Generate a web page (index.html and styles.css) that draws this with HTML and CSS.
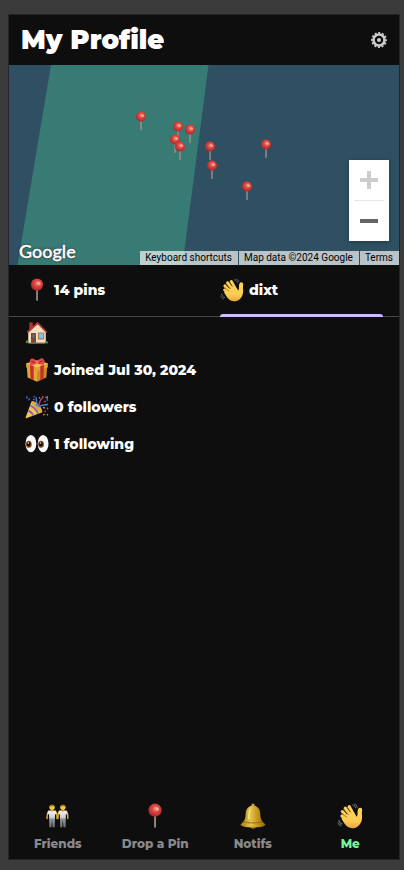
FILE: index.html
```
<!DOCTYPE html>
<html lang="en">
<head>
<meta charset="utf-8">
<meta name="viewport" content="width=device-width, initial-scale=1">
<title>My Profile</title>
<link rel="stylesheet" href="styles.css">
</head>
<body>
<svg class="defs" aria-hidden="true">
  <defs>
    <radialGradient id="red" cx=".55" cy=".4" r=".6">
      <stop offset="0" stop-color="#f7988a"/><stop offset=".4" stop-color="#df4a43"/><stop offset="1" stop-color="#a92428"/>
    </radialGradient>
    <linearGradient id="skin" gradientUnits="userSpaceOnUse" x1="0" y1="2" x2="0" y2="23">
      <stop offset="0" stop-color="#ffd75a"/><stop offset=".7" stop-color="#fccb55"/><stop offset="1" stop-color="#eba83a"/>
    </linearGradient>
    <linearGradient id="gold" x1="0" y1="0" x2="1" y2="0">
      <stop offset="0" stop-color="#a8760d"/><stop offset=".4" stop-color="#e6c44c"/><stop offset=".65" stop-color="#c99a22"/><stop offset="1" stop-color="#8e620f"/>
    </linearGradient>
    <linearGradient id="cloth" x1="0" y1="0" x2="0" y2="1">
      <stop offset="0" stop-color="#f4f4f4"/><stop offset=".45" stop-color="#c9cdd0"/><stop offset=".5" stop-color="#8e9397"/><stop offset="1" stop-color="#70757a"/>
    </linearGradient>
    <symbol id="pin" viewBox="0 0 24 24">
      <path d="M11.2 10h1.700v12.200l-.9.8-.8-.8z" fill="#a08f88"/>
      <circle cx="12" cy="6.600" r="6.100" fill="url(#red)"/>
      <path d="M12.500 3.800l3 .6.3 2.300-2.600.4z" fill="#ffc2b5" opacity=".65"/>
    </symbol>
    <symbol id="wave" viewBox="0 0 24 24">
      <g fill="none" stroke="url(#skin)" stroke-linecap="round" stroke-width="2.900">
        <path d="M13 12.500L7.600 4.800"/><path d="M16 12L11.300 3.400"/><path d="M11 14.500L4.900 7.900"/><path d="M10 16.500L4.600 12"/>
      </g>
      <path d="M7 13l6.500-6.500 4.700 6.100c.9-1.200.7-2.800.8-4.600.1-2.600 1.200-4 2.800-3.600 1.500.4 1.600 1.500 1.300 3.300-.4 2.300.3 4.300-.1 7.200-.6 4.800-4.700 8.600-9 8.400-3-.1-5-1.700-6.800-3.900L4 14.200z" fill="url(#skin)"/>
      <path d="M12.800 8.600L9.500 3.800M10.800 10.700L6 5.600M9 13L4.600 9.400" fill="none" stroke="#a0681d" stroke-width=".7" stroke-linecap="round"/>
      <path d="M14 1.600c1.800.3 2.900 1.500 3.500 3.200M15.900.7c1.600.7 2.500 1.800 3 3.500M1.600 15.600c.3 2 1.500 3.300 3.400 3.900M.7 17.600c.5 1.800 1.700 3 3.400 3.500" fill="none" stroke="#626466" stroke-width="1"/>
    </symbol>
    <symbol id="house" viewBox="0 0 24 24">
      <path d="M4.300 1.500h3.500v7H4.300z" fill="#a83a30"/>
      <path d="M3.200 11L12.700 3l8.100 8v11.300H3.200z" fill="#f1dfbd"/>
      <path d="M2.300 11.500L12.700 2l9.100 9.500" fill="none" stroke="#b83a33" stroke-width="1.700" stroke-linejoin="round"/>
      <path d="M6 12h5v10.300H6z" fill="#7c4932"/><path d="M7.200 13.300h2.500v3H7.200z" fill="#50748a"/>
      <path d="M13 11.500h6.200v7H13z" fill="#a77548"/><path d="M13.900 12.400h4.400v4.900h-4.400z" fill="#78c4ee"/>
      <path d="M1 22c-.7-2.300 1-3.800 2.500-2l.8 2.300zM19.500 22.300c.2-2.600 2.600-3.600 3.800-.5l-.4.7z" fill="#568b3d"/>
      <path d="M5 22h14.500" stroke="#8b7866"/>
    </symbol>
    <symbol id="gift" viewBox="0 0 24 24">
      <path d="M1.800 8L12 12v11.700L2.600 19.500z" fill="#e2a834"/><path d="M12 12l10.200-4-.8 11.500-9.400 4.200z" fill="#cb8b25"/>
      <path d="M1 5.600L12 2.600l11 3-.3 3.800L12 13.200 1.300 9.400z" fill="#e0a237"/><path d="M1 5.600l11-3 11 3-11 3.600z" fill="#f4c54f"/>
      <path d="M5 6.900l3.700 1.200v14.100l-3.200-1.500zM15.300 8.100L19 6.900l-.5 13.800-3.200 1.500z" fill="#c62e30"/>
      <path d="M12 5.600C8 7.200 5 7.900 4.700 6.100S4.800.8 6.800.5C9 .3 10.500 2 12 3.200 13.700 1.600 16-.4 17.800.5c1.600.9 2.600 4.600 1.300 5.800-1.200 1-4.800.1-7.100-.7z" fill="#e34a47"/>
      <path d="M6.200 3.200l4.300 1.600M17.800 2.700l-4.200 2" stroke="#951f28"/><circle cx="12" cy="4.400" r="1.800" fill="#f16963"/>
    </symbol>
    <symbol id="party" viewBox="0 0 24 24">
      <path d="M6.600 6.300C11.500 7 16.500 12 17.300 17.300L1.300 23.300c-.6.100-.9-.2-.7-.8z" fill="#f0c552"/>
      <ellipse cx="12" cy="11.600" rx="2.400" ry="7.300" transform="rotate(-43 12 11.600)" fill="#dba944"/>
      <path d="M5.300 10.500c3.500 1.700 6.400 4.600 7.800 8.300M3.300 15.600c2.400 1 4.200 2.900 5 4.900" fill="none" stroke="#8d55c4" stroke-width="1.700"/>
      <path d="M12 11.500C12.800 7.700 10.400 6 11.300 2.400M13.500 12c2.800-2.700 5.800-1.400 9.500-2.700" fill="none" stroke="#3d83df" stroke-width="1.500"/>
      <path d="M12.900 10.600c3.200-2.100.7-4.600 3.400-6.400 1.500-1 1.800-2 1.400-3.200" fill="none" stroke="#c54267" stroke-width="1.400"/>
      <path d="M1.500 1.300l.8 2.500M5 3.300L3.400 5.300M20 2.200c2.400 0 2.800 1.400 2.200 3.600M8.700 1l1 1.300" fill="none" stroke="#3f68d5" stroke-width="1.300"/>
      <path d="M8 4l1.600 1M19 7l1.700-1M22 12.600l1 1.700M19.500 16.700l1.500-1" stroke="#d24465" stroke-width="1.300"/>
      <path d="M14 2.400l1 1M18 12.400l2 .8M18.500 20.300l1-1.400M22 19l.8 1.300M22.800 1.300l-1 1.300" stroke="#cf9430" stroke-width="1.300"/>
    </symbol>
    <symbol id="eyes" viewBox="0 0 24 24">
      <ellipse cx="5.900" cy="11.700" rx="5.400" ry="8.600" fill="#fafafa"/><ellipse cx="18.100" cy="11.700" rx="5.400" ry="8.600" fill="#fafafa"/>
      <ellipse cx="3.800" cy="12.200" rx="2.900" ry="3.500" fill="#7d4a20"/><ellipse cx="16" cy="12.200" rx="2.900" ry="3.500" fill="#7d4a20"/>
      <ellipse cx="3.700" cy="12.200" rx="1.700" ry="2.200" fill="#130e0b"/><ellipse cx="15.900" cy="12.200" rx="1.700" ry="2.200" fill="#130e0b"/>
      <circle cx="3.300" cy="11" r=".7" fill="#fff"/><circle cx="15.500" cy="11" r=".7" fill="#fff"/>
    </symbol>
    <symbol id="person" viewBox="0 0 12 24">
      <path d="M2.700 7C1 9 .8 11.600 1 14.500M9.300 7c1.700 2 1.900 4.600 1.700 7.500" fill="none" stroke="#edb932" stroke-width="1.400" stroke-linecap="round"/>
      <path d="M4 6.500h4c1.600 0 2.300 1.400 2.400 3.500L9 10.600l-.3 12.700H6.600L6 15.500l-.6 7.800H3.300L3 10.600l-1.400-.6C1.700 7.900 2.400 6.500 4 6.500z" fill="url(#cloth)"/>
      <path d="M5 5h2v2L6 8 5 7z" fill="#d79c20"/><circle cx="6" cy="3.300" r="2.700" fill="#f5c940"/>
      <path d="M3.200 3.500C2.700-.1 9.300-.1 8.800 3.500 8 1.700 5 1.500 3.200 3.500z" fill="#987015"/>
    </symbol>
    <symbol id="friends" viewBox="0 0 24 24">
      <use href="#person" x="1" y="0" width="11" height="24"/><use href="#person" x="11" y="0" width="11" height="24"/>
    </symbol>
    <symbol id="bell" viewBox="0 0 24 24">
      <circle cx="12" cy="1.900" r="1.500" fill="#cfa02a"/><ellipse cx="12" cy="21.700" rx="2.800" ry="2" fill="#9c6c18"/>
      <path d="M10.200 2.500h3.600c3.800 1.400 4.800 4.300 5 8.200.2 4.300 1.200 6.600 4.700 8.800-.2 2.300-5 2.900-11.500 2.900S.7 21.800.5 19.500c3.500-2.200 4.500-4.500 4.700-8.800.2-3.900 1.200-6.800 5-8.200z" fill="url(#gold)"/>
      <path d="M3.500 17.200c4 1.700 13 1.700 17 0" fill="none" stroke="#8d6310" stroke-width=".8"/>
      <path d="M9.300 6c-1 2-1 5.500-1.300 9" fill="none" stroke="#fff1a0" stroke-width="1.300" opacity=".8"/>
    </symbol>
  </defs>
</svg>

<main class="app">
  <header class="header">
    <h1 class="title">My Profile</h1>
    <button class="settings" type="button" aria-label="Settings">
      <svg class="gear" viewBox="0 0 16 16" aria-hidden="true">
        <circle cx="8" cy="8" r="7.100" fill="none" stroke="#ccc" stroke-width="1.700" stroke-dasharray="2.100 1.617" stroke-dashoffset="1.050"/>
        <circle cx="8" cy="8" r="5.500" fill="none" stroke="#ccc" stroke-width="2.600"/>
        <circle cx="8" cy="8" r="2" fill="#ccc"/>
      </svg>
    </button>
  </header>

  <section class="map" aria-label="Map of pins">
    <svg class="map-canvas" viewBox="0 0 390 200" preserveAspectRatio="xMidYMid slice" aria-hidden="true">
      <path fill="#2e5062" d="M0 0h390v200H0z"/>
      <path fill="#387b75" d="M42 0h157.500l-26 200H8.500z"/>
      <use href="#pin" x="122" y="46" width="20" height="20"/>
      <use href="#pin" x="159" y="56" width="20" height="20"/>
      <use href="#pin" x="171" y="59" width="20" height="20"/>
      <use href="#pin" x="156" y="69" width="20" height="20"/>
      <use href="#pin" x="161" y="76" width="20" height="20"/>
      <use href="#pin" x="247" y="74" width="20" height="20"/>
      <use href="#pin" x="191" y="76" width="20" height="20"/>
      <use href="#pin" x="193" y="95" width="20" height="20"/>
      <use href="#pin" x="228" y="116" width="20" height="20"/>
    </svg>
    <span class="brand">Google</span>
    <div class="zoom">
      <button class="zoom-button" type="button" aria-label="Zoom in" disabled>
        <svg class="zoom-icon" viewBox="0 0 18 18"><path fill="#ccc" d="M7 0h4v7h7v4h-7v7H7v-7H0V7h7z"/></svg>
      </button>
      <button class="zoom-button" type="button" aria-label="Zoom out">
        <svg class="zoom-icon" viewBox="0 0 18 18"><path fill="#666" d="M0 7h18v4H0z"/></svg>
      </button>
    </div>
    <div class="credits">
      <button class="credit" type="button">Keyboard shortcuts</button>
      <span class="credit">Map data ©2024 Google</span>
      <a class="credit" href="#terms">Terms</a>
    </div>
  </section>

  <div class="tabs" role="tablist">
    <button class="tab" type="button" role="tab" aria-selected="false"><svg class="icon"><use href="#pin"/></svg>14 pins</button>
    <button class="tab tab-active" type="button" role="tab" aria-selected="true"><svg class="icon"><use href="#wave"/></svg>dixt</button>
  </div>

  <ul class="facts">
    <li class="fact"><svg class="icon"><use href="#house"/></svg></li>
    <li class="fact"><svg class="icon"><use href="#gift"/></svg>Joined Jul 30, 2024</li>
    <li class="fact"><svg class="icon"><use href="#party"/></svg>0 followers</li>
    <li class="fact"><svg class="icon"><use href="#eyes"/></svg>1 following</li>
  </ul>

  <nav class="nav">
    <a class="nav-link" href="#friends-page"><svg class="nav-icon"><use href="#friends"/></svg>Friends</a>
    <a class="nav-link" href="#drop"><svg class="nav-icon"><use href="#pin"/></svg>Drop a Pin</a>
    <a class="nav-link" href="#notifs"><svg class="nav-icon"><use href="#bell"/></svg>Notifs</a>
    <a class="nav-link nav-current" href="#me" aria-current="page"><svg class="nav-icon"><use href="#wave"/></svg>Me</a>
  </nav>
</main>
</body>
</html>
```
FILE: styles.css
```
* { box-sizing: border-box; }

body {
  display: flex;
  min-height: 100vh;
  margin: 0;
  padding: 14px 4px 10px 8px;
  background: #3b3b3b;
  color: #fff;
  font-family: Montserrat, Inter, sans-serif;
}

button { padding: 0; border: 0; background: none; color: inherit; font: inherit; }
a { color: inherit; text-decoration: none; }
.defs { position: absolute; width: 0; height: 0; }

.app {
  display: flex;
  flex: 1;
  flex-direction: column;
  border: 1px solid #262626;
  background: #0e0e0e;
}

.header {
  display: flex;
  align-items: center;
  justify-content: space-between;
  height: 50px;
  padding: 0 12px;
}
.title { margin: 0; font-size: 26px; font-weight: 900; line-height: 32px; }
.settings { display: flex; }
.gear { width: 16px; height: 16px; }

.map { position: relative; height: 200px; overflow: hidden; }
.map-canvas { display: block; width: 100%; height: 100%; }
.brand {
  position: absolute;
  left: 10px;
  bottom: 2px;
  font-family: Lato, sans-serif;
  font-size: 18px;
  font-weight: 500;
  line-height: 24px;
  text-shadow: 0 0 2px #333, 0 0 2px #333, 0 0 1px #333;
  -webkit-text-stroke: 0.4px #fff;
}
.zoom {
  position: absolute;
  right: 10px;
  bottom: 24px;
  width: 40px;
  padding: 0 5px;
  background: #fff;
  box-shadow: 0 1px 4px rgba(0, 0, 0, .3);
}
.zoom-button { display: grid; place-items: center; width: 100%; height: 40px; }
.zoom-button + .zoom-button { height: 41px; border-top: 1px solid #e6e6e6; }
.zoom-icon { width: 18px; height: 18px; }
.credits {
  position: absolute;
  right: 0;
  bottom: 0;
  display: flex;
  gap: 1px;
  color: #000;
  font-family: Roboto, sans-serif;
  font-size: 10px;
  line-height: 14px;
}
.credit { padding: 0 6px 0 5px; background: rgba(245, 245, 245, .7); }

.tabs {
  display: grid;
  grid-template-columns: 1fr 1fr;
  gap: 32px;
  height: 52px;
  padding: 0 16px;
  border-bottom: 1px solid #49454f;
}
.tab {
  position: relative;
  display: flex;
  align-items: center;
  gap: 5px;
  height: 50px;
  font-size: 14px;
  font-weight: 800;
}
.tab-active::after {
  position: absolute;
  right: 0;
  bottom: -2px;
  left: 0;
  height: 3px;
  border-radius: 3px 3px 0 0;
  background: #cfbcff;
  content: "";
}
.icon { flex: none; width: 24px; height: 24px; }

.facts {
  display: flex;
  flex: 1;
  flex-direction: column;
  gap: 13px;
  margin: 0;
  padding: 4px 16px;
  list-style: none;
}
.fact { display: flex; align-items: center; gap: 5px; font-size: 14px; font-weight: 800; line-height: 24px; }

.nav { display: grid; grid-template-columns: repeat(4, 1fr); padding-bottom: 7px; }
.nav-link {
  display: flex;
  flex-direction: column;
  align-items: center;
  gap: 7px;
  color: #898989;
  font-size: 12px;
  font-weight: 800;
  line-height: 16px;
}
.nav-icon { width: 26px; height: 26px; }
.nav-current { color: #79f59b; }
```
